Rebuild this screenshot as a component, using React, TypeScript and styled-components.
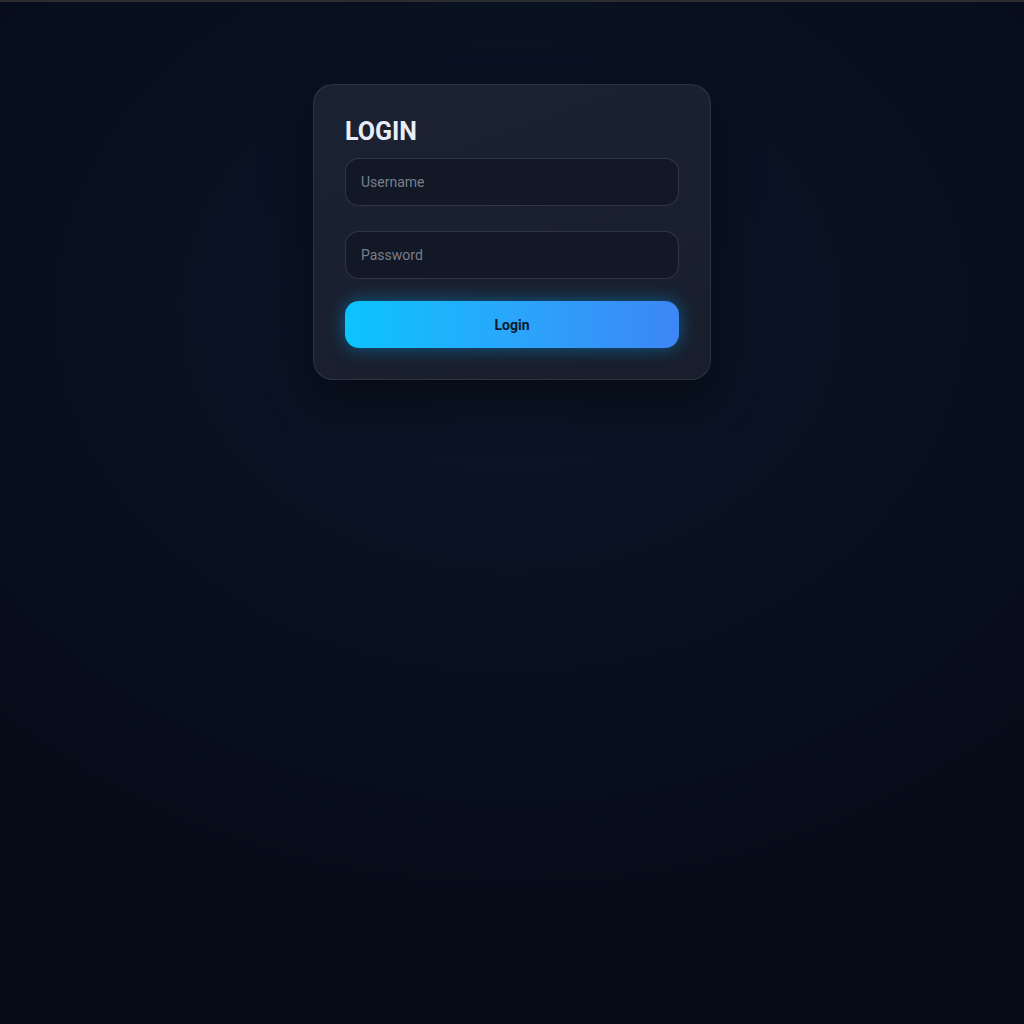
import * as React from "react";
import styled, { createGlobalStyle } from "styled-components";

const GlobalStyle = createGlobalStyle`
  html, body {
    margin: 0;
    padding: 0;
    height: 100%;
    background: #070d1b;
  }
  #root {
    min-height: 100vh;
  }
`;

export default function App() {
  return (
    <>
      <GlobalStyle />
      <Page>
        <TopBar />
        <Card>
          <Title>LOGIN</Title>
          <Field type="text" placeholder="Username" />
          <Field type="password" placeholder="Password" $gap={25} />
          <LoginButton type="button">Login</LoginButton>
        </Card>
      </Page>
    </>
  );
}

const Page = styled.div`
  min-height: 100vh;
  display: flex;
  flex-direction: column;
  align-items: center;
  background: radial-gradient(
    ellipse 75% 60% at 50% 30%,
    #0c1628 0%,
    #08101f 60%,
    #060b18 100%
  );
  font-family: Roboto, "Liberation Sans", sans-serif;
`;

const TopBar = styled.div`
  align-self: stretch;
  height: 2px;
  background: #2b2d31;
  margin-bottom: 82px;
`;

const Card = styled.div`
  box-sizing: border-box;
  width: 398px;
  display: flex;
  flex-direction: column;
  padding: 31px;
  border-radius: 20px;
  border: 1px solid rgba(255, 255, 255, 0.09);
  background: linear-gradient(160deg, #1b2232 0%, #181e2c 100%);
  box-shadow: 0 20px 50px rgba(0, 0, 0, 0.45);
`;

const Title = styled.h1`
  margin: 0 0 12px;
  font-size: 25px;
  line-height: 29px;
  padding-top: 1px;
  font-weight: 700;
  color: #e8eef8;
`;

const Field = styled.input<{ $gap?: number }>`
  box-sizing: border-box;
  width: 100%;
  height: 48px;
  margin-top: ${(p) => p.$gap ?? 0}px;
  padding: 0 15px;
  border-radius: 14px;
  border: 1px solid rgba(255, 255, 255, 0.13);
  background: #121826;
  color: #d6dce8;
  font-family: Roboto, "Liberation Sans", sans-serif;
  font-size: 14px;
  outline: none;

  &::placeholder {
    color: #787f8c;
  }
`;

const LoginButton = styled.button`
  height: 47px;
  margin-top: 22px;
  border: none;
  border-radius: 14px;
  background: linear-gradient(90deg, #0cc4ff 0%, #2aa6fb 50%, #3d86f5 100%);
  box-shadow: 0 0 18px rgba(0, 170, 255, 0.45);
  color: #0c1a30;
  font-family: Roboto, "Liberation Sans", sans-serif;
  font-size: 14px;
  font-weight: 700;
  cursor: pointer;
`;
